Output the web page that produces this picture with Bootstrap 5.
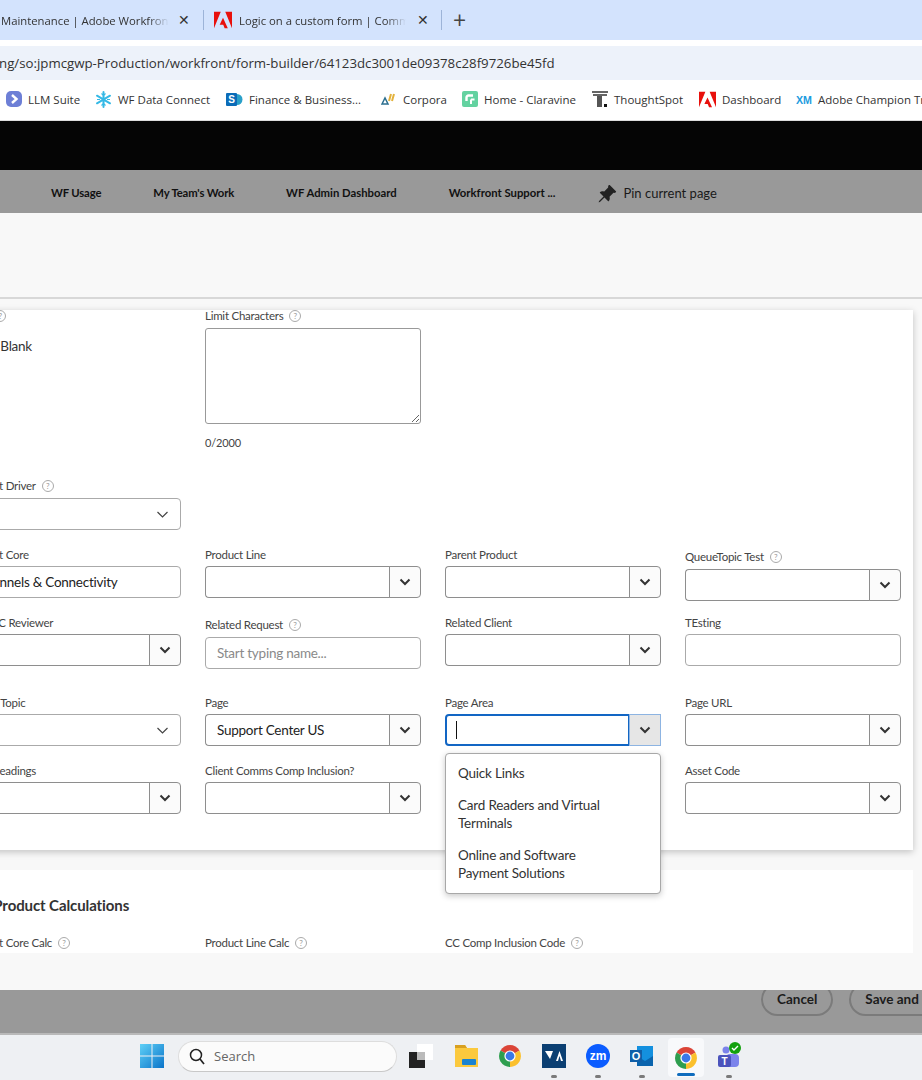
<!doctype html>
<html lang="en"><head><meta charset="utf-8"><title>Form builder</title>
<link href="https://cdn.jsdelivr.net/npm/bootstrap@5.3.0/dist/css/bootstrap.min.css" rel="stylesheet">
<style>
html,body{margin:0;height:1080px;overflow:hidden;background:#fff}
body{font-family:"Lato","Open Sans",sans-serif;color:#444}
.shell{width:922px;height:1080px;overflow:hidden}
.tabbar{height:40px;background:#d3e3fd;font:11.3px "Open Sans",sans-serif;color:#333}
.tabtxt{white-space:nowrap;overflow:hidden;-webkit-mask-image:linear-gradient(90deg,#000 88%,transparent);mask-image:linear-gradient(90deg,#000 88%,transparent)}
.t1{width:168px;margin-left:1px}.t2{width:167px;margin-left:7px}
.tabx{font-size:14px;line-height:1;color:#333;width:12px;text-align:center}
.x1{margin-left:9px}.x2{margin-left:11px}
.tsep{width:1px;height:20px;background:#9db4d8}.s1{margin-left:13px;margin-right:10px}.s2{margin-left:12px;margin-right:11px}
.plus{font-size:23px;line-height:1;color:#444}
.gapstrip{height:6px;background:#fff}
.addr{height:34px;background:#edf2fa;font:13.25px/34px "Open Sans",sans-serif;color:#333;white-space:nowrap;overflow:hidden}
.addr span{display:block;margin-left:-1px}
.bmarks{height:41px;padding-bottom:2px;background:#fff;border-bottom:1px solid #ddd;font:11.5px "Open Sans",sans-serif;color:#333;white-space:nowrap;overflow:hidden}
.bm{display:flex;align-items:center;gap:6px;flex:none}
.bm svg{flex:none}
.blackbar{height:49px;background:#050505}
.greynav{height:43px;background:#999;font-size:11.3px;font-weight:700;color:#111;padding:4px 0 0 51px;gap:52px;white-space:nowrap}
.tightnav{letter-spacing:-.15px}
.pinlink{font-weight:400;font-size:13px;color:#1a1a1a;gap:6px;margin-left:-10px}
.pagehead{height:86px;background:#f8f8f8;border-bottom:2px solid #d8d8d8}
.scrollarea{height:654px;background:#f8f8f8;overflow:hidden;padding-top:11px}
.sheet{width:973px;margin-left:-60px;padding:0 12px 36px 25px;background:#fff;border:0;border-radius:0;box-shadow:0 2px 7px rgba(0,0,0,.22)}
.sheet2{margin-top:20px;padding-top:25px;box-shadow:none}
.sheettitle{font-size:15px;font-weight:700;color:#333;line-height:20px;margin:0 0 22px;letter-spacing:-.1px}
.fl{display:flex;align-items:center;height:12px;font-size:11.5px;letter-spacing:-.25px;line-height:12px;margin:0 0 5px;color:#444;white-space:nowrap}
.fl.far{margin-bottom:6px}
.low{padding-top:2px}
.hlp{display:inline-flex;flex:none;align-items:center;justify-content:center;width:12px;height:12px;border:1px solid #aaa;border-radius:50%;font-size:8px;letter-spacing:0;line-height:1;color:#999;margin-left:6px}
.r-a{margin-bottom:31px}.r-b{margin-bottom:19px}.r-c{margin-bottom:16px}.r-d{margin-bottom:28px}.r-e{margin-bottom:19px}
.ctl.form-control,.ctl.form-select{height:32px;min-height:32px;font-size:13.5px;letter-spacing:-.25px;padding:0 11px;border:1px solid #aaa;border-radius:4px;color:#222;box-shadow:none;font-family:inherit}
.ctl.form-select{background-position:right 11px center;background-size:13px 9px;background-image:url("data:image/svg+xml,%3csvg xmlns='http://www.w3.org/2000/svg' viewBox='0 0 13 9'%3e%3cpath fill='none' stroke='%23444' stroke-width='1.2' d='M1.5 2l5 5 5-5'/%3e%3c/svg%3e")}
.ctl::placeholder{color:#8a8a8a}
.taarea.form-control{height:96px;border:1px solid #999;border-radius:3px}
.cnt{font-size:11px;letter-spacing:-.15px;line-height:12px;margin-top:13px;color:#444}
.blankv{font-size:13.5px;letter-spacing:-.25px;line-height:18px;margin-top:15px;color:#333}
.combo .form-control{height:32px;min-height:32px;font-size:13.5px;letter-spacing:-.25px;padding:0 11px;border:1px solid #8e8e8e;border-right:0;border-radius:4px 0 0 4px;color:#222;font-family:inherit;box-shadow:none}
.combo .btn{width:32px;height:32px;padding:0;display:flex;align-items:center;justify-content:center;background:#fbfbfb;border:1px solid #8e8e8e;border-radius:0 4px 4px 0}
.combo.act .form-control{border:2px solid #1266c4;border-right:2px solid #1266c4;position:relative;z-index:2}
.combo.act .btn{background:#e6e6e6;border-color:#8db4e2;margin-left:-1px}
.caretbar{position:absolute;left:12px;top:7px;width:1px;height:18px;background:#111;z-index:3}
.optmenu.dropdown-menu{display:block;top:39px;left:0;width:216px;min-width:0;padding:10px 0 11px;border:1px solid #a8a8a8;border-radius:4px;box-shadow:0 2px 6px rgba(0,0,0,.22);font-size:13.5px;letter-spacing:-.2px;z-index:1000}
.optmenu .dropdown-item{padding:0 50px 14px 12px;white-space:normal;line-height:18px;color:#333;background:none}
.optmenu .dropdown-item:last-child{padding-bottom:0}
.footbar{height:43px;background:#999;overflow:hidden;padding-left:761px;gap:16px}
.pillbtn{height:33px;margin-top:-7px;border:2px solid #7b7b7b;border-radius:17px;background:transparent;font-size:13.5px;font-weight:700;color:#1c1c1c;padding:0 14px;white-space:nowrap;flex:none}
.taskbar{height:47px;background:#eef0f3;border-top:2px solid #b9b9b9;position:relative}
.taskin{height:45px;padding-left:140px}
.winlogo{margin-top:-3px;flex:none}
.searchbox{width:219px;height:31px;margin:-3px 0 0 14px;border:1px solid #ddd;border-bottom-color:#c8c8c8;border-radius:16px;background:#fbfbfb;padding-left:10px;gap:9px;font:13px "Open Sans",sans-serif;color:#666}
.tico{position:relative;width:44px;height:45px;display:flex;align-items:center;justify-content:center;flex:none}
.tico svg{margin-top:-3px}
.tdot{position:absolute;bottom:2px;left:19px;width:6px;height:3px;border-radius:2px;background:#7a7a7a}
.tact{background:#f8f9fb;border-radius:4px;height:39px;width:36px;margin:0 4px}
.tact .tdot{left:9px;width:18px;height:3px;background:#0f6cbd;bottom:1px}
.tact svg{margin-top:0}
</style></head>
<body>
<svg width="0" height="0" class="position-absolute">
<defs>
<symbol id="chev" viewBox="0 0 12 8"><path d="M1.5 1.5 6 6l4.5-4.5" fill="none" stroke="#333" stroke-width="2"/></symbol>
<symbol id="adobe" viewBox="0 0 24 24"><path fill="#e8100c" d="M9 1H0v22zM15 1h9v22zM12 9l6.400 14h-4.200l-1.900-4.600H7.600z"/></symbol>
<symbol id="chrome" viewBox="0 0 24 24"><path fill="#db4437" d="M12 12 2.500 6.500A11 11 0 0 1 21.500 6.500z"/><path fill="#fbc02d" d="M12 12 21.500 6.500A11 11 0 0 1 12 23z"/><path fill="#2e9e4f" d="M12 12 12 23A11 11 0 0 1 2.500 6.500z"/><circle cx="12" cy="12" r="5.600" fill="#fff"/><circle cx="12" cy="12" r="4.400" fill="#3b78e7"/></symbol>
</defs>
</svg>
<div class="shell">
  <div class="tabbar d-flex align-items-center">
    <div class="tabtxt t1">Maintenance | Adobe Workfront</div>
    <span class="tabx x1">✕</span><span class="tsep s1"></span>
    <svg width="18" height="20"><use href="#adobe"/></svg>
    <div class="tabtxt t2">Logic on a custom form | Community</div>
    <span class="tabx x2">✕</span><span class="tsep s2"></span>
    <span class="plus">+</span>
  </div>
  <div class="gapstrip"></div>
  <div class="addr"><span>ng/so:jpmcgwp-Production/workfront/form-builder/64123dc3001de09378c28f9726be45fd</span></div>
  <div class="bmarks d-flex align-items-center ps-1">
    <div class="bm" style="margin-left:2px;width:89px"><svg width="16" height="16" viewBox="0 0 16 16"><rect width="16" height="16" rx="5" fill="#6d7fd6"/><path d="M6 4l4.500 4L6 12" fill="none" stroke="#fff" stroke-width="2.400"/></svg>LLM Suite</div>
    <div class="bm" style="width:131px"><svg width="17" height="17" viewBox="0 0 17 17"><g stroke="#35b9e6" stroke-width="2" stroke-linecap="round"><path d="M8.500 1v15M2 4.700l13 7.600M2 12.300l13-7.600"/></g><g fill="none" stroke="#35b9e6" stroke-width="1.200"><path d="M6.500 2.500l2 2 2-2M6.500 14.500l2-2 2 2M2 8.500h3M12 8.500h3"/></g></svg>WF Data Connect</div>
    <div class="bm" style="width:155px"><svg width="17" height="17" viewBox="0 0 17 17"><circle cx="11" cy="8.500" r="5.500" fill="#2aa0c9"/><rect y="2" width="11" height="13" rx="1" fill="#0b6cb8"/><text x="5.500" y="12" font-size="10" font-weight="700" fill="#fff" text-anchor="middle" font-family="Liberation Sans">S</text></svg>Finance &amp; Business...</div>
    <div class="bm" style="width:81px"><svg width="16" height="14" viewBox="0 0 16 14"><path d="M1 12 4 6l3 6z" fill="none" stroke="#2c6f8f" stroke-width="1.500"/><path d="M8 9l2-7M11 9l2-7" stroke="#e3b23c" stroke-width="2"/></svg>Corpora</div>
    <div class="bm" style="width:130px"><svg width="16" height="16" viewBox="0 0 16 16"><rect width="16" height="16" rx="2" fill="#63d2a0"/><path d="M11 4.500H6.500a2 2 0 0 0-2 2V10" fill="none" stroke="#fff" stroke-width="2.400"/><path d="M9 8.500h3.500M9 8.500V13" fill="none" stroke="#fff" stroke-width="2"/></svg>Home - Claravine</div>
    <div class="bm" style="width:107px"><svg width="16" height="17" viewBox="0 0 16 17"><path d="M0 1h16M1 4h14" stroke="#333" stroke-width="1.500"/><rect x="5" y="5" width="5" height="11" fill="#555"/><rect x="12" y="13" width="3" height="3" fill="#111"/></svg>ThoughtSpot</div>
    <div class="bm" style="width:97px"><svg width="17" height="17"><use href="#adobe"/></svg>Dashboard</div>
    <div class="bm"><svg width="16" height="12" viewBox="0 0 16 12"><text x="8" y="10.500" font-size="11" font-weight="700" fill="#1b9ce0" text-anchor="middle" font-family="Liberation Sans" textLength="16" lengthAdjust="spacingAndGlyphs">XM</text></svg>Adobe Champion Training</div>
  </div>
  <div class="blackbar"></div>
  <nav class="greynav d-flex align-items-center">
    <span class="tightnav">WF Usage</span><span class="tightnav">My Team's Work</span><span>WF Admin Dashboard</span><span>Workfront Support ...</span>
    <span class="pinlink d-flex align-items-center">
      <svg width="20" height="20" viewBox="0 0 16 16" fill="#222"><path d="M9.828.722a.5.5 0 0 1 .354.146l4.950 4.950a.5.5 0 0 1 0 .707c-.48.48-1.072.588-1.503.588-.177 0-.335-.018-.46-.039l-3.134 3.134a5.927 5.927 0 0 1 .16 1.013c.046.702-.032 1.687-.72 2.375a.5.5 0 0 1-.707 0l-2.829-2.828-3.182 3.182c-.195.195-1.219.902-1.414.707-.195-.195.512-1.220.707-1.414l3.182-3.182-2.828-2.829a.5.5 0 0 1 0-.707c.688-.688 1.673-.767 2.375-.72a5.922 5.922 0 0 1 1.013.16l3.134-3.133a2.772 2.772 0 0 1-.04-.461c0-.43.108-1.022.589-1.503a.5.5 0 0 1 .353-.146z"/></svg>Pin current page</span>
  </nav>
  <div class="pagehead"></div>
  <div class="scrollarea">
    <div class="card sheet">
      <div class="row r-a">
        <div class="col-3"><span class="fl">Type<span class="hlp">?</span></span><div class="blankv">Allow Blank</div></div>
        <div class="col-3"><span class="fl far">Limit Characters<span class="hlp">?</span></span><textarea class="form-control ctl taarea"></textarea><div class="cnt">0/2000</div></div>
      </div>
      <div class="row r-b">
        <div class="col-3"><span class="fl far">Product Driver<span class="hlp">?</span></span><select class="form-select ctl"></select></div>
      </div>
      <div class="row r-c">
        <div class="col-3"><span class="fl">Product Core</span><input class="form-control ctl" value="Channels &amp; Connectivity"></div>
        <div class="col-3"><span class="fl">Product Line</span><div class="input-group combo"><input class="form-control"><button class="btn" type="button" aria-label="Open"><svg width="12" height="8"><use href="#chev"/></svg></button></div></div>
        <div class="col-3"><span class="fl">Parent Product</span><div class="input-group combo"><input class="form-control"><button class="btn" type="button" aria-label="Open"><svg width="12" height="8"><use href="#chev"/></svg></button></div></div>
        <div class="col-3 low"><span class="fl far">QueueTopic Test<span class="hlp">?</span></span><div class="input-group combo"><input class="form-control"><button class="btn" type="button" aria-label="Open"><svg width="12" height="8"><use href="#chev"/></svg></button></div></div>
      </div>
      <div class="row r-d">
        <div class="col-3"><span class="fl">Page CC Reviewer</span><div class="input-group combo"><input class="form-control"><button class="btn" type="button" aria-label="Open"><svg width="12" height="8"><use href="#chev"/></svg></button></div></div>
        <div class="col-3 low"><span class="fl far">Related Request<span class="hlp">?</span></span><input class="form-control ctl" placeholder="Start typing name..."></div>
        <div class="col-3"><span class="fl">Related Client</span><div class="input-group combo"><input class="form-control"><button class="btn" type="button" aria-label="Open"><svg width="12" height="8"><use href="#chev"/></svg></button></div></div>
        <div class="col-3"><span class="fl">TEsting</span><input class="form-control ctl"></div>
      </div>
      <div class="row r-e">
        <div class="col-3"><span class="fl">Queue Topic</span><select class="form-select ctl"></select></div>
        <div class="col-3"><span class="fl">Page</span><div class="input-group combo"><input class="form-control" value="Support Center US"><button class="btn" type="button" aria-label="Open"><svg width="12" height="8"><use href="#chev"/></svg></button></div></div>
        <div class="col-3"><span class="fl">Page Area</span>
          <div class="input-group combo act position-relative"><input class="form-control"><span class="caretbar"></span><button class="btn" type="button" aria-label="Open"><svg width="12" height="8"><use href="#chev"/></svg></button>
            <ul class="dropdown-menu show optmenu list-unstyled">
              <li class="dropdown-item">Quick Links</li>
              <li class="dropdown-item">Card Readers and Virtual Terminals</li>
              <li class="dropdown-item">Online and Software Payment Solutions</li>
            </ul>
          </div>
        </div>
        <div class="col-3"><span class="fl">Page URL</span><div class="input-group combo"><input class="form-control"><button class="btn" type="button" aria-label="Open"><svg width="12" height="8"><use href="#chev"/></svg></button></div></div>
      </div>
      <div class="row">
        <div class="col-3"><span class="fl">Page Headings</span><div class="input-group combo"><input class="form-control"><button class="btn" type="button" aria-label="Open"><svg width="12" height="8"><use href="#chev"/></svg></button></div></div>
        <div class="col-3"><span class="fl">Client Comms Comp Inclusion?</span><div class="input-group combo"><input class="form-control"><button class="btn" type="button" aria-label="Open"><svg width="12" height="8"><use href="#chev"/></svg></button></div></div>
        <div class="col-3"></div>
        <div class="col-3"><span class="fl">Asset Code</span><div class="input-group combo"><input class="form-control"><button class="btn" type="button" aria-label="Open"><svg width="12" height="8"><use href="#chev"/></svg></button></div></div>
      </div>
    </div>
    <div class="card sheet sheet2">
      <h2 class="sheettitle">Key Product Calculations</h2>
      <div class="row">
        <div class="col-3"><span class="fl">Product Core Calc<span class="hlp">?</span></span></div>
        <div class="col-3"><span class="fl">Product Line Calc<span class="hlp">?</span></span></div>
        <div class="col-3"><span class="fl">CC Comp Inclusion Code<span class="hlp">?</span></span></div>
      </div>
    </div>
  </div>
  <div class="pagefoot" style="height:37px;background:#f8f8f8"></div>
  <div class="footbar d-flex align-items-start">
    <button class="pillbtn" type="button">Cancel</button><button class="pillbtn" type="button">Save and Close</button>
  </div>
  <div class="taskbar">
    <div class="taskin d-flex align-items-center">
      <svg width="24" height="24" viewBox="0 0 24 24" class="winlogo"><defs><linearGradient id="wg" x1="0" y1="0" x2="1" y2="1"><stop offset="0" stop-color="#5fd0f7"/><stop offset="1" stop-color="#0a74c9"/></linearGradient></defs><path fill="url(#wg)" d="M0 0h11.500v11.500H0zM12.500 0H24v11.500H12.500zM0 12.500h11.500V24H0zM12.500 12.500H24V24H12.500z"/></svg>
      <div class="searchbox d-flex align-items-center"><svg width="16" height="17" viewBox="0 0 16 17"><circle cx="7" cy="7" r="5.500" fill="none" stroke="#222" stroke-width="1.500"/><path d="M11 11l4 5" stroke="#222" stroke-width="1.700"/></svg>Search</div>
      <div class="tico" style="margin-left:6px;width:36px"><svg width="24" height="24" viewBox="0 0 24 24"><rect x="8" y="0" width="16" height="16" fill="#fff"/><rect x="0" y="8" width="16" height="16" fill="#222"/><rect x="8" y="8" width="8" height="8" fill="#bbb"/></svg></div>
      <div class="tico" style="width:44px;margin-left:5px"><svg width="25" height="24" viewBox="0 0 25 24"><path d="M1 1h10l2 3h11v19H1z" fill="#fbc93d"/><path d="M1 1h10l2 3H1z" fill="#d8a020"/><rect x="8" y="15" width="14" height="6" rx="1" fill="#1a83d0"/></svg></div>
      <div class="tico"><svg width="24" height="24"><use href="#chrome"/></svg></div>
      <div class="tico"><svg width="24" height="24" viewBox="0 0 24 24"><rect width="24" height="24" fill="#0b3f72"/><path d="M3 7h8l-3 8zM14 17l3.500-10L21 17" fill="#fff"/><path d="M16 17l1.500-5 1.500 5z" fill="#0b3f72"/></svg><span class="tdot"></span></div>
      <div class="tico"><svg width="24" height="24" viewBox="0 0 24 24"><circle cx="12" cy="12" r="12" fill="#0b5cff"/><text x="12" y="16" font-size="12" font-weight="700" fill="#fff" text-anchor="middle" font-family="Liberation Sans">zm</text></svg><span class="tdot"></span></div>
      <div class="tico"><svg width="24" height="24" viewBox="0 0 24 24"><rect x="7" y="2" width="16" height="20" fill="#1490df"/><path d="M7 12l8 5 8-5v10H7z" fill="#0a64ad"/><rect y="6" width="12" height="12" fill="#0f5fa8"/><text x="6" y="16" font-size="11" font-weight="700" fill="#fff" text-anchor="middle" font-family="Liberation Sans">O</text></svg><span class="tdot"></span></div>
      <div class="tico tact"><svg width="24" height="24"><use href="#chrome"/></svg><span class="tdot"></span></div>
      <div class="tico position-relative" style="margin-left:-1px"><svg width="26" height="28" viewBox="0 0 26 28"><circle cx="10" cy="8" r="3.500" fill="#7b83eb"/><rect x="10" y="12" width="13" height="13" rx="4" fill="#7b83eb"/><rect x="2" y="13" width="13" height="12" rx="2" fill="#4b53bc"/><text x="8.500" y="23" font-size="10" font-weight="700" fill="#fff" text-anchor="middle" font-family="Liberation Sans">T</text><circle cx="19" cy="6" r="6" fill="#13a10e"/><path d="M16 6l2 2 4-4" fill="none" stroke="#fff" stroke-width="1.400"/></svg><span class="tdot"></span></div>
    </div>
  </div>
</div>
</body></html>
